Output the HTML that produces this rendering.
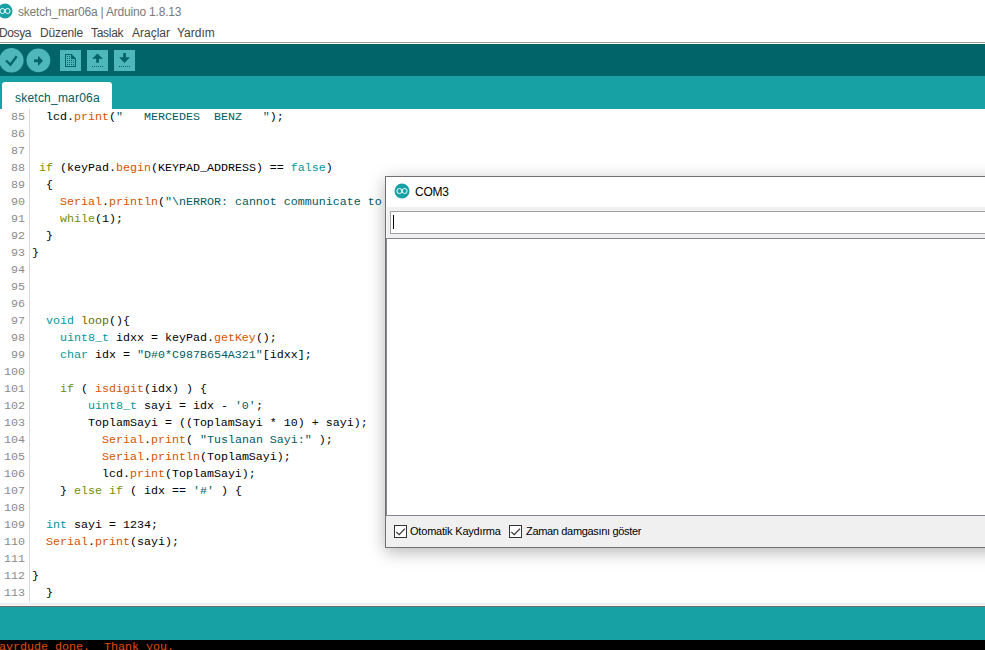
<!DOCTYPE html>
<html><head><meta charset="utf-8">
<style>
*{margin:0;padding:0;box-sizing:border-box}
html,body{width:985px;height:650px;overflow:hidden;background:#fff;position:relative}
body{font-family:"Liberation Sans",sans-serif}
.a{position:absolute}
.t{position:absolute;white-space:pre;line-height:1}
.ui{font-family:"Liberation Sans",sans-serif;font-size:12px}
.mono{font-family:"Liberation Mono",monospace;font-size:11.67px}
#title{left:18px;top:6px;color:#7a7a7a;letter-spacing:-0.2px}
#menu span{position:absolute;top:26px;color:#444}
#toolbar{left:0;top:44px;width:985px;height:32px;background:#006468}
#tabbar{left:0;top:76px;width:985px;height:33px;background:#17a1a5}
#tab{left:2px;top:82px;width:110px;height:27px;background:#fff;border-radius:3px 3px 0 0}
#tabtxt{left:15px;top:92px;color:#005b5b;letter-spacing:0.22px}
#gutter{left:29px;top:109px;width:1px;height:493px;background:#dadada}
.ln{position:absolute;left:0;width:25px;text-align:right;color:#8a8a8a;white-space:pre}
.cl{position:absolute;left:32px;white-space:pre;color:#000}
.k1{color:#00979c}.k2{color:#d35400}.k3{color:#728e00}.s{color:#005c5f}.lp{color:#5e6d03}
#status{left:0;top:607px;width:985px;height:33px;background:#17a1a5}
#console{left:0;top:640px;width:985px;height:10px;background:#000;overflow:hidden}
#serial{left:385px;top:176px;width:620px;height:372px;background:#f0f0f0;border:1px solid #707070;
 box-shadow:0 4px 16px rgba(0,0,0,.29)}
.cb{width:13px;height:13px;border:1px solid #333;background:#fff}
</style></head><body>
<!-- title bar -->
<svg class="a" style="left:-3px;top:3px" width="16" height="16" viewBox="0 0 16 16">
 <circle cx="8" cy="8" r="7.5" fill="#17a1a5"/>
 <circle cx="5.4" cy="8" r="2.5" fill="none" stroke="#fff" stroke-width="0.95"/>
 <circle cx="10.6" cy="8" r="2.5" fill="none" stroke="#fff" stroke-width="0.95"/>
</svg>
<div id="title" class="t ui">sketch_mar06a | Arduino 1.8.13</div>
<div id="menu" class="ui">
 <span style="left:-1px;letter-spacing:-0.4px">Dosya</span><span style="left:40px;letter-spacing:-0.15px">Düzenle</span><span style="left:91px;letter-spacing:-0.3px">Taslak</span><span style="left:132px">Araçlar</span><span style="left:177px">Yardım</span>
</div>
<div class="a" style="left:0;top:42px;width:985px;height:1px;background:#a0a0a0"></div>

<div id="toolbar" class="a"></div>
<svg class="a" style="left:0;top:44px" width="150" height="32" viewBox="0 0 150 32">
 <g fill="#4db7bb">
  <circle cx="11.4" cy="16.3" r="12.2"/>
  <circle cx="38.4" cy="16.3" r="11.9"/>
  <rect x="60" y="6" width="21" height="21"/>
  <rect x="87" y="6" width="21" height="21"/>
  <rect x="114" y="6" width="21" height="21"/>
 </g>
 <g fill="#006468">
  <path d="M6.1 16.5 L10.4 20.7 L16.7 12.3" fill="none" stroke="#006468" stroke-width="2.3"/>
  <rect x="34" y="15.4" width="4.6" height="2.8"/>
  <path d="M38 11.8 L43 16.8 L38 21.9 Z"/>
  <path d="M65 10 H71.5 L76 14.5 V23 H65 Z M66 11 V22 H75 V15 H71 V11 Z"/>
  <path d="M97.4 9.5 L102.9 14.8 H98.9 V18.8 H96.2 V14.8 H92.2 Z"/>
  <path d="M123.2 9.1 H125.9 V13.2 H129.9 L124.5 18.9 L119.1 13.2 H123.2 Z"/>
  <rect x="67" y="12" width="1" height="1"/><rect x="69" y="12" width="1" height="1"/><rect x="67" y="14" width="1" height="1"/><rect x="69" y="14" width="1" height="1"/><rect x="67" y="16" width="1" height="1"/><rect x="69" y="16" width="1" height="1"/><rect x="71" y="16" width="1" height="1"/><rect x="73" y="16" width="1" height="1"/><rect x="67" y="18" width="1" height="1"/><rect x="69" y="18" width="1" height="1"/><rect x="71" y="18" width="1" height="1"/><rect x="73" y="18" width="1" height="1"/><rect x="67" y="20" width="1" height="1"/><rect x="69" y="20" width="1" height="1"/><rect x="71" y="20" width="1" height="1"/><rect x="73" y="20" width="1" height="1"/>
  <rect x="92" y="22" width="1" height="1"/><rect x="94" y="22" width="1" height="1"/><rect x="96" y="22" width="1" height="1"/><rect x="98" y="22" width="1" height="1"/><rect x="100" y="22" width="1" height="1"/><rect x="102" y="22" width="1" height="1"/><rect x="119" y="22" width="1" height="1"/><rect x="121" y="22" width="1" height="1"/><rect x="123" y="22" width="1" height="1"/><rect x="125" y="22" width="1" height="1"/><rect x="127" y="22" width="1" height="1"/><rect x="129" y="22" width="1" height="1"/>
 </g>
</svg>
<div id="tabbar" class="a"></div>
<div id="tab" class="a"></div>
<div id="tabtxt" class="t ui">sketch_mar06a</div>
<div id="gutter" class="a"></div>
<div id="code" class="mono"><div class="ln" style="top:110px">85</div>
<div class="cl" style="top:110px">  lcd.<span class="k2">print</span>(<span class="s">&quot;   MERCEDES  BENZ   &quot;</span>);</div>
<div class="ln" style="top:127px">86</div>
<div class="ln" style="top:144px">87</div>
<div class="ln" style="top:161px">88</div>
<div class="cl" style="top:161px"> <span class="k3">if</span> (keyPad.<span class="k2">begin</span>(KEYPAD_ADDRESS) == <span class="k1">false</span>)</div>
<div class="ln" style="top:178px">89</div>
<div class="cl" style="top:178px">  {</div>
<div class="ln" style="top:195px">90</div>
<div class="cl" style="top:195px">    <span class="k2">Serial</span>.<span class="k2">println</span>(<span class="s">&quot;\nERROR: cannot communicate to keypad&quot;</span></div>
<div class="ln" style="top:212px">91</div>
<div class="cl" style="top:212px">    <span class="k3">while</span>(1);</div>
<div class="ln" style="top:229px">92</div>
<div class="cl" style="top:229px">  }</div>
<div class="ln" style="top:246px">93</div>
<div class="cl" style="top:246px">}</div>
<div class="ln" style="top:263px">94</div>
<div class="ln" style="top:280px">95</div>
<div class="ln" style="top:297px">96</div>
<div class="ln" style="top:314px">97</div>
<div class="cl" style="top:314px">  <span class="k1">void</span> <span class="lp">loop</span>(){</div>
<div class="ln" style="top:331px">98</div>
<div class="cl" style="top:331px">    <span class="k1">uint8_t</span> idxx = keyPad.<span class="k2">getKey</span>();</div>
<div class="ln" style="top:348px">99</div>
<div class="cl" style="top:348px">    <span class="k1">char</span> idx = <span class="s">&quot;D#0*C987B654A321&quot;</span>[idxx];</div>
<div class="ln" style="top:365px">100</div>
<div class="ln" style="top:382px">101</div>
<div class="cl" style="top:382px">    <span class="k3">if</span> ( <span class="k2">isdigit</span>(idx) ) {</div>
<div class="ln" style="top:399px">102</div>
<div class="cl" style="top:399px">        <span class="k1">uint8_t</span> sayi = idx - <span class="s">&#x27;0&#x27;</span>;</div>
<div class="ln" style="top:416px">103</div>
<div class="cl" style="top:416px">        ToplamSayi = ((ToplamSayi * 10) + sayi);</div>
<div class="ln" style="top:433px">104</div>
<div class="cl" style="top:433px">          <span class="k2">Serial</span>.<span class="k2">print</span>( <span class="s">&quot;Tuslanan Sayi:&quot;</span> );</div>
<div class="ln" style="top:450px">105</div>
<div class="cl" style="top:450px">          <span class="k2">Serial</span>.<span class="k2">println</span>(ToplamSayi);</div>
<div class="ln" style="top:467px">106</div>
<div class="cl" style="top:467px">          lcd.<span class="k2">print</span>(ToplamSayi);</div>
<div class="ln" style="top:484px">107</div>
<div class="cl" style="top:484px">    } <span class="k3">else</span> <span class="k3">if</span> ( idx == <span class="s">&#x27;#&#x27;</span> ) {</div>
<div class="ln" style="top:501px">108</div>
<div class="ln" style="top:518px">109</div>
<div class="cl" style="top:518px">  <span class="k1">int</span> sayi = 1234;</div>
<div class="ln" style="top:535px">110</div>
<div class="cl" style="top:535px">  <span class="k2">Serial</span>.<span class="k2">print</span>(sayi);</div>
<div class="ln" style="top:552px">111</div>
<div class="ln" style="top:569px">112</div>
<div class="cl" style="top:569px">}</div>
<div class="ln" style="top:586px">113</div>
<div class="cl" style="top:586px">  }</div></div>
<div class="a" style="left:0;top:603px;width:985px;height:2px;background:#efefef"></div>
<div class="a" style="left:0;top:605px;width:985px;height:1px;background:#f8f8f8"></div>
<div class="a" style="left:0;top:606px;width:985px;height:1px;background:#6c6a6a"></div>
<div id="status" class="a"></div>
<div id="console" class="a"><div class="t mono" style="left:-1px;top:2px;color:#e34c00">avrdude done.  Thank you.</div></div>
<div id="serial" class="a">
 <div class="a" style="left:0;top:0;width:600px;height:30px;background:#fff"></div>
 <div class="a" style="left:0;top:30px;width:1px;height:31px;background:#f9f9f9"></div>
 <div class="a" style="left:4px;top:34px;width:600px;height:23px;background:#fff;border:1px solid #a2a2a6"></div>
 <div class="a" style="left:7px;top:38px;width:1px;height:14px;background:#000"></div>
 <div class="a" style="left:0;top:61px;width:600px;height:278px;background:#fff;border-top:1px solid #828790;border-left:1px solid #828790;border-bottom:1px solid #828790"></div>
 <div class="a cb" style="left:8px;top:348px"></div>
 <div class="a cb" style="left:123px;top:348px"></div>
 <svg class="a" style="left:8px;top:348px" width="130" height="13" viewBox="0 0 130 13"><path d="M2.3 6.9 L5.2 9.7 L11 3.6 M117.3 6.9 L120.2 9.7 L126 3.6" fill="none" stroke="#333" stroke-width="1.25"/></svg>
</div>
<svg class="a" style="left:394px;top:183px" width="16" height="16" viewBox="0 0 16 16">
 <circle cx="8" cy="8" r="7.5" fill="#17a1a5"/>
 <circle cx="5.4" cy="8" r="2.5" fill="none" stroke="#fff" stroke-width="0.95"/>
 <circle cx="10.6" cy="8" r="2.5" fill="none" stroke="#fff" stroke-width="0.95"/>
</svg>
<div class="t ui" style="left:415px;top:186px;color:#000;letter-spacing:-0.25px">COM3</div>
<div class="t ui" style="left:410px;top:526px;color:#000;font-size:11px;letter-spacing:-0.2px">Otomatik Kaydırma</div>
<div class="t ui" style="left:526px;top:526px;color:#000;font-size:11px;letter-spacing:-0.33px">Zaman damgasını göster</div>
</body></html>
